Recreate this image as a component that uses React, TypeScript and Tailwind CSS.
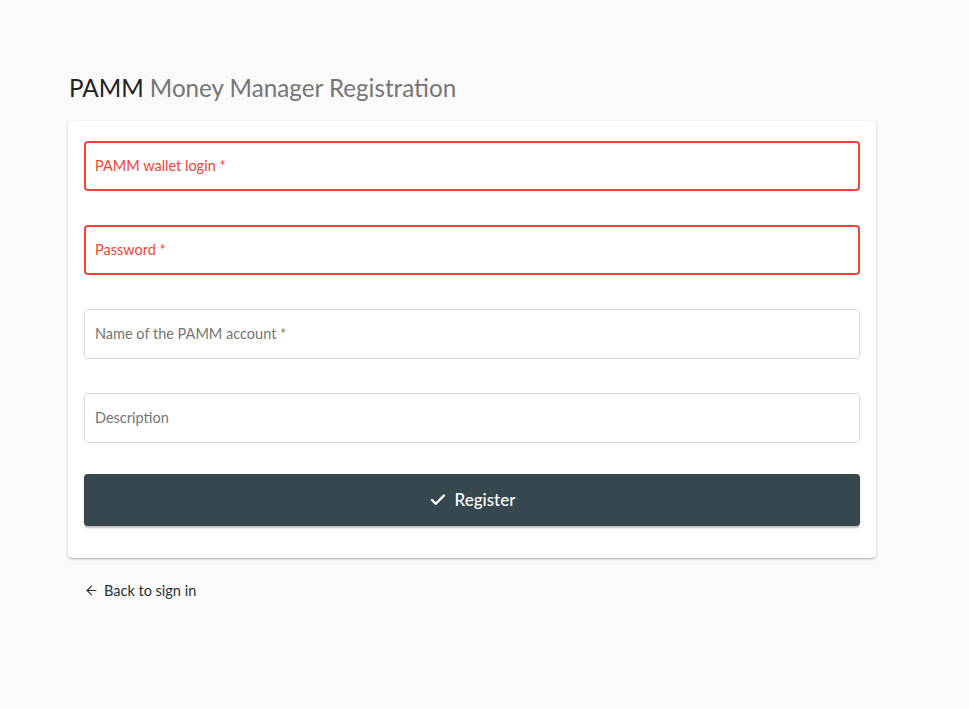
import { Check, ArrowLeft } from 'lucide-react';

const fields = [
  { label: 'PAMM wallet login *', error: true },
  { label: 'Password *', error: true },
  { label: 'Name of the PAMM account *', error: false },
  { label: 'Description', error: false },
];

export default function App() {
  return (
    <div
      className="min-h-screen bg-[#fafafa] pt-[71px] pl-[68px]"
      style={{ fontFamily: 'Lato, "Noto Sans", sans-serif' }}
    >
      <div className="w-[808px]">
        {/* Title */}
        <h1 className="text-[24.2px] leading-[34px] pl-px mb-[16px] text-[#757575]">
          <span className="text-[#212121]">PAMM</span> Money Manager Registration
        </h1>

        {/* Card */}
        <div className="bg-white rounded shadow-[0_1px_3px_rgba(0,0,0,0.2),0_1px_1px_rgba(0,0,0,0.14)] px-4 pt-5 pb-8">
          <div className="flex flex-col gap-[34px]">
            {fields.map((f) => (
              <div
                key={f.label}
                className={`h-[50px] rounded flex items-center ${
                  f.error
                    ? 'border-2 border-[#f44336] text-[#f44336] px-[9px]'
                    : 'border border-[#dcdcdc] px-[10px] text-[#757575]'
                }`}
              >
                <span className="text-[14.5px]">{f.label}</span>
              </div>
            ))}
          </div>

          <button className="mt-[31px] w-full h-[52px] rounded bg-[#37474f] text-white flex items-center justify-center gap-[8px] shadow-[0_2px_2px_rgba(0,0,0,0.25)]">
            <Check className="w-[18px] h-[18px]" strokeWidth={3.2} />
            <span className="text-[17px] font-medium">Register</span>
          </button>
        </div>

        {/* Back link */}
        <div className="mt-[22px] pl-4 flex items-center gap-[5px] text-[14.5px] text-[#263238]">
          <ArrowLeft className="w-[15px] h-[15px]" strokeWidth={1.8} />
          <span>Back to sign in</span>
        </div>
      </div>
    </div>
  );
}
